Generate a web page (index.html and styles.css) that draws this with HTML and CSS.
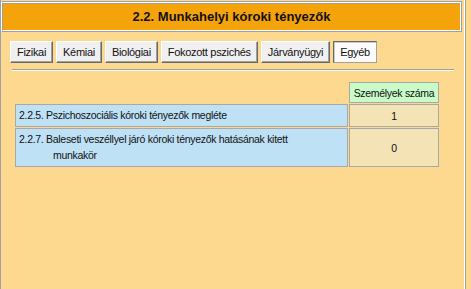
FILE: index.html
```html
<!DOCTYPE html>
<html lang="hu">
<head>
    <meta charset="UTF-8">
    <title>Munkahelyi kóroki tényezők</title>
    <link rel="stylesheet" href="styles.css">
</head>
<body>
    <div class="panel">
        <div class="title-frame">
            <div class="title">2.2. Munkahelyi kóroki tényezők</div>
        </div>

        <!-- Fülek -->
        <div class="tabs">
            <button type="button" class="tab">Fizikai</button>
            <button type="button" class="tab">Kémiai</button>
            <button type="button" class="tab">Biológiai</button>
            <button type="button" class="tab">Fokozott pszichés</button>
            <button type="button" class="tab">Járványügyi</button>
            <button type="button" class="tab active">Egyéb</button>
        </div>
        <hr class="divider">

        <table class="data">
            <tr>
                <th class="empty"></th>
                <th class="head">Személyek száma</th>
            </tr>
            <tr>
                <td class="label">2.2.5. Pszichoszociális kóroki tényezők megléte</td>
                <td class="value">1</td>
            </tr>
            <tr>
                <td class="label">2.2.7. Baleseti veszéllyel járó kóroki tényezők hatásának kitett munkakör</td>
                <td class="value">0</td>
            </tr>
        </table>
    </div>
</body>
</html>
```

FILE: styles.css
```css
/* Alap */
body {
    margin: 0;
    background-color: #fdd98f;
    font-family: "Liberation Sans", Arial, sans-serif;
    font-size: 11px;
    color: #111;
}
.panel {
    width: 466px;
    min-height: 100vh;
    box-sizing: border-box;
    border-left: 1px solid #a0a0a0;
    border-right: 1px solid #a0a0a0;
    box-shadow: inset -1px 0 0 #fff;
    padding-top: 1px;
}
.title-frame {
    margin-right: 3px;
    border-top: 1px solid #a0a0a0;
    border-left: 1px solid #fff;
    border-right: 1px solid #a0a0a0;
    border-bottom: 1px solid #a0a0a0;
}
.title {
    height: 27px;
    line-height: 27px;
    border-top: 1px solid #fff;
    border-left: 1px solid #a0a0a0;
    border-right: 1px solid #fff;
    border-bottom: 1px solid #fff;
    box-shadow: inset 0 1px 0 #a0a0a0;
    background-color: #f5a30a;
    text-align: center;
    font-family: "Liberation Sans", Arial, sans-serif;
    font-weight: bold;
    font-size: 13px;
}
.tabs {
    display: flex;
    gap: 3px;
    padding: 9px 0 0 9px;
}
.tab {
    height: 22px;
    padding: 0 6px;
    font-family: "Liberation Sans", Arial, sans-serif;
    font-size: 11px;
    letter-spacing: -0.3px;
    color: #111;
    background-color: #f0f0f0;
    border: 1px solid;
    border-color: #fff #696969 #696969 #fff;
    box-shadow: inset -1px -1px 0 #a0a0a0;
}
.tab.active {
    background-color: #fbfbfb;
    border-color: #696969 #a0a0a0 #a0a0a0 #696969;
    box-shadow: inset 1px 1px 0 #c8c8c8;
}
.divider {
    margin: 6px 11px 0 11px;
    border: 0;
    border-top: 1px solid #a0a0a0;
    border-bottom: 1px solid #fff;
}
.data {
    margin: 10px 0 0 13px;
    width: 426px;
    table-layout: fixed;
    border-spacing: 1px;
    font-size: 10.5px;
    letter-spacing: -0.3px;
}
.data th,
.data td {
    padding: 0 3px;
    font-weight: normal;
}
.data .head {
    width: 86px;
    height: 19px;
    padding: 0 1px;
    white-space: nowrap;
    border: 1px solid #a8a8a8;
    background-color: #c8fbc8;
    text-align: center;
}
.data .label {
    border: 1px solid #a8a8a8;
    background-color: #bfe1f6;
    padding: 2px 30px 3px 37px;
    text-indent: -34px;
    line-height: 16px;
}
.data .value {
    border: 1px solid #a8a8a8;
    background-color: #f3e3b5;
    text-align: center;
}
```
